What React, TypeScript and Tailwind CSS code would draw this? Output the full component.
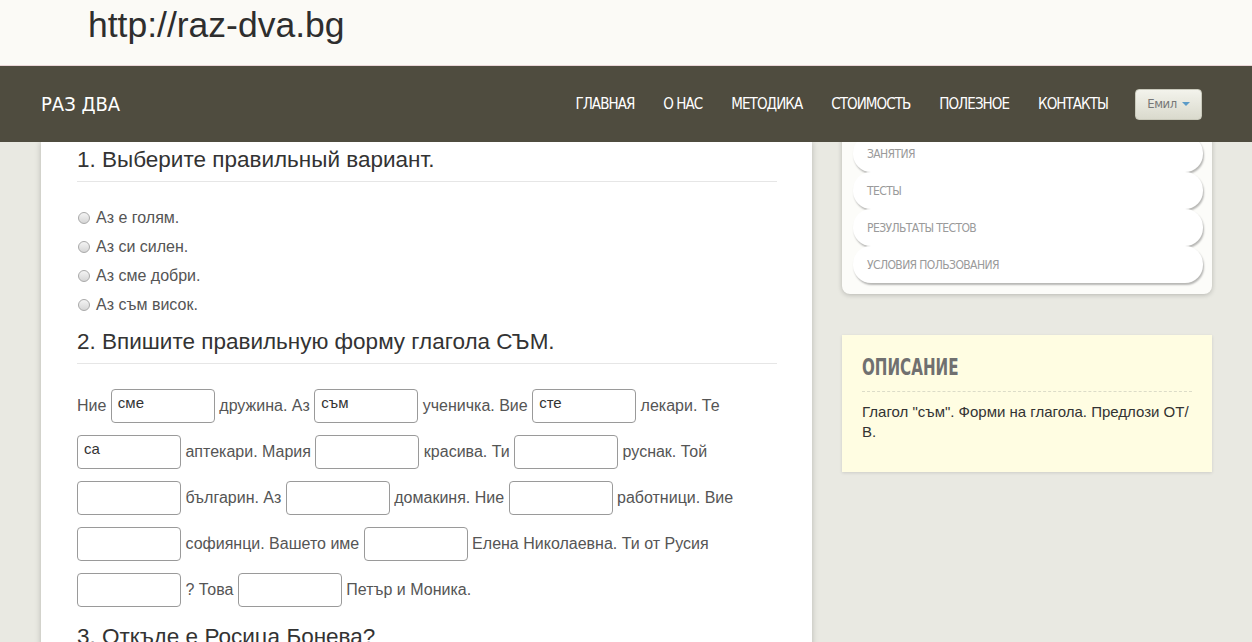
import React from "react";

const narrow = "font-['DejaVu_Sans',sans-serif] font-stretch-condensed";
const arial = "font-['Liberation_Sans',Arial,sans-serif]";

const navItems = ["ГЛАВНАЯ", "О НАС", "МЕТОДИКА", "СТОИМОСТЬ", "ПОЛЕЗНОЕ", "КОНТАКТЫ"];
const sideItems = ["ЗАНЯТИЯ", "ТЕСТЫ", "РЕЗУЛЬТАТЫ ТЕСТОВ", "УСЛОВИЯ ПОЛЬЗОВАНИЯ"];
const options = ["Аз е голям.", "Аз си силен.", "Аз сме добри.", "Аз съм висок."];

// inline answer box; an nbsp keeps the baseline when it is empty
const Blank: React.FC<{ value?: string }> = ({ value }) => (
    <span className="inline-block w-[104px] h-[34px] align-[3px] border border-[#9a9a9a] rounded-[4px] bg-white px-[6px] leading-[26px] text-[15px] text-[#333]">
        {value || "\u00a0"}
    </span>
);

const App: React.FC = () => {
    return (
        <div className={`w-[1252px] h-[642px] overflow-hidden bg-[#e9e9e2] ${arial}`}>
            {/* address band */}
            <div className="h-[66px] bg-[#fbfaf6] border-b border-[#ead6d8] pl-[88px] pt-[3px]">
                <span className="text-[35.5px] leading-[44px] text-[#2e2e2e]">http://raz-dva.bg</span>
            </div>

            {/* navbar */}
            <div className="relative z-10 h-[76px] bg-[#4f4c3f] flex items-center pl-[41px] pr-[50px]">
                <span className={`${narrow} text-[20px] text-white`}>РАЗ ДВА</span>
                <div className="ml-auto flex items-center gap-[29px]">
                    {navItems.map((item) => (
                        <span key={item} className={`${narrow} text-[15px] tracking-[-0.95px] text-white`}>
                            {item}
                        </span>
                    ))}
                    <div className="ml-[-2px] w-[67px] h-[31px] rounded-[4px] bg-gradient-to-b from-[#f3f3ec] to-[#dadacd] border border-[#c9c9bb] flex items-center justify-center gap-[5px]">
                        <span className={`${narrow} text-[13px] tracking-[-0.4px] text-[#777]`}>Емил</span>
                        <span className="w-0 h-0 border-l-[4px] border-r-[4px] border-t-[4px] border-l-transparent border-r-transparent border-t-[#5b9bc8]" />
                    </div>
                </div>
            </div>

            {/* content */}
            <div className="flex gap-[30px] pl-[41px]">
                {/* main card */}
                <div className="w-[771px] h-[600px] bg-white shadow-[0_0_6px_rgba(0,0,0,0.22)] pl-[36px] pr-[35px]">
                    <h3 className="pt-[5px] pb-[8px] border-b border-[#e6e6e6] text-[22.5px] leading-[26px] text-[#333]">
                        1. Выберите правильный вариант.
                    </h3>
                    <div className="mt-[21px]">
                        {options.map((o) => (
                            <div key={o} className="h-[29px] flex items-center gap-[6px] pl-[1px]">
                                <span className="w-[12px] h-[12px] rounded-full border border-[#a9a9a9] bg-gradient-to-b from-[#f4f4f4] to-[#d6d6d6]" />
                                <span className="text-[16px] text-[#555]">{o}</span>
                            </div>
                        ))}
                    </div>
                    <h3 className="mt-[10px] pb-[8px] border-b border-[#e6e6e6] text-[22.5px] leading-[26px] text-[#333]">
                        2. Впишите правильную форму глагола СЪМ.
                    </h3>
                    <p className="mt-[19px] text-[16px] leading-[46px] text-[#555]">
                        Ние <Blank value="сме" /> дружина. Аз <Blank value="съм" /> ученичка. Вие <Blank value="сте" /> лекари. Те{" "}
                        <Blank value="са" /> аптекари. Мария <Blank /> красива. Ти <Blank /> руснак. Той <Blank /> българин. Аз{" "}
                        <Blank /> домакиня. Ние <Blank /> работници. Вие <Blank /> софиянци. Вашето име <Blank /> Елена Николаевна. Ти от Русия{" "}
                        <Blank /> ? Това <Blank /> Петър и Моника.
                    </p>
                    <h3 className="mt-[11px] text-[22.5px] leading-[26px] text-[#333]">3. Откъде е Росица Бонева?</h3>
                </div>

                {/* sidebar */}
                <div className="w-[370px] flex flex-col">
                    <div className="-mt-[10px] bg-[#fcfcf9] rounded-b-[8px] shadow-[0_1px_5px_rgba(0,0,0,0.22)] pt-[3px] pl-[11px] pr-[9px] pb-[11px]">
                        {sideItems.map((s) => (
                            <div
                                key={s}
                                className="h-[37px] rounded-[18px] bg-white shadow-[1px_2px_2px_rgba(0,0,0,0.28)] flex items-center pl-[14px]"
                            >
                                <span className={`${narrow} text-[12px] tracking-[-0.6px] text-[#9a9a9a]`}>{s}</span>
                            </div>
                        ))}
                    </div>

                    <div className="mt-[41px] bg-[#fffde2] shadow-[0_1px_3px_rgba(0,0,0,0.12)] px-[20px] pt-[18px] pb-[30px]">
                        <div className="pb-[9px] border-b border-dashed border-[#dcdcc8]">
                            <span className={`${narrow} inline-block origin-left scale-x-[0.73] font-bold text-[23px] leading-[28px] text-[#707070]`}>
                                ОПИСАНИЕ
                            </span>
                        </div>
                        <p className="mt-[10px] text-[15px] leading-[20px] text-[#333]">
                            Глагол "съм". Форми на глагола. Предлози ОТ/В.
                        </p>
                    </div>
                </div>
            </div>
        </div>
    );
};

export default App;
